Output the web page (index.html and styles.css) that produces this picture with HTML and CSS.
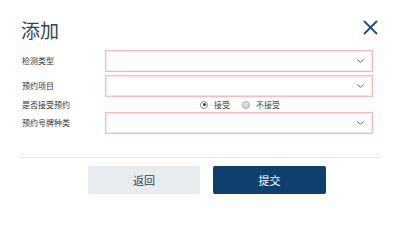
FILE: index.html
```html
<!DOCTYPE html>
<html lang="zh-CN">
<head>
<meta charset="utf-8">
<title>添加</title>
<link rel="stylesheet" href="styles.css">
</head>
<body>
<div class="dialog">
  <div class="header">
    <h1 class="title">添加</h1>
    <button class="close" type="button" aria-label="关闭">
      <svg width="15" height="15" viewBox="0 0 15 15"><path d="M1 1 L14 14 M14 1 L1 14" stroke="#1d4f7c" stroke-width="1.8" fill="none"/></svg>
    </button>
  </div>
  <form class="form">
    <div class="row">
      <label class="label">检测类型</label>
      <div class="select"><svg class="chev" width="7" height="4" viewBox="0 0 7 4"><path d="M0.5 0.5 L3.5 3.3 L6.5 0.5" stroke="#666" stroke-width="1" fill="none"/></svg></div>
    </div>
    <div class="row">
      <label class="label">预约项目</label>
      <div class="select"><svg class="chev" width="7" height="4" viewBox="0 0 7 4"><path d="M0.5 0.5 L3.5 3.3 L6.5 0.5" stroke="#666" stroke-width="1" fill="none"/></svg></div>
    </div>
    <div class="row row-radio">
      <label class="label">是否接受预约</label>
      <div class="radios">
        <span class="radio checked"></span><span class="radio-text">接受</span>
        <span class="radio"></span><span class="radio-text">不接受</span>
      </div>
    </div>
    <div class="row">
      <label class="label">预约号牌种类</label>
      <div class="select"><svg class="chev" width="7" height="4" viewBox="0 0 7 4"><path d="M0.5 0.5 L3.5 3.3 L6.5 0.5" stroke="#666" stroke-width="1" fill="none"/></svg></div>
    </div>
  </form>
  <div class="divider"></div>
  <div class="actions">
    <button class="btn btn-back" type="button">返回</button>
    <button class="btn btn-submit" type="button">提交</button>
  </div>
</div>
</body>
</html>
```
FILE: styles.css
```css
html, body {
  margin: 0;
  padding: 0;
  background: #ffffff;
}
body {
  font-family: "Noto Sans CJK SC", "Noto Sans", sans-serif;
  width: 400px;
  height: 217px;
  overflow: hidden;
}
.dialog {
  padding: 18px 20px 0 20px;
}
.header {
  display: flex;
  justify-content: space-between;
  align-items: flex-start;
  height: 24px;
  padding: 0 2px 0 1px;
}
.title {
  margin: 0;
  font-size: 19px;
  line-height: 24px;
  font-weight: normal;
  color: #2f4556;
}
.close {
  margin-top: 2px;
  padding: 0;
  border: 0;
  background: none;
  width: 15px;
  height: 15px;
  display: block;
}
.close svg { display: block; }
.form {
  margin-top: 8px;
  display: flex;
  flex-direction: column;
  gap: 3px;
  padding: 0 7px 0 2px;
}
.row {
  display: flex;
  align-items: center;
  height: 22px;
}
.row-radio {
  height: 9px;
}
.label {
  width: 83px;
  flex: none;
  font-size: 8px;
  line-height: 10px;
  color: #333;
}
.select {
  flex: 1;
  height: 22px;
  box-sizing: border-box;
  border: 1px solid #f6bcbc;
  box-shadow: 0 0 0 1px #fde3e3 inset;
  display: flex;
  align-items: center;
  justify-content: flex-end;
  padding-right: 8px;
}
.chev { display: block; }
.radios {
  flex: 1;
  display: flex;
  align-items: center;
  justify-content: center;
  padding-left: 2px;
}
.radio {
  width: 8px;
  height: 8px;
  box-sizing: border-box;
  border-radius: 50%;
  border: 1px solid #a9a9a9;
  background: linear-gradient(#e6e6e6, #cfcfcf);
  position: relative;
  flex: none;
}
.radio.checked {
  background: #fff;
  border-color: #8c8c8c;
}
.radio.checked::after {
  content: "";
  position: absolute;
  left: 1.5px;
  top: 1.5px;
  width: 3px;
  height: 3px;
  border-radius: 50%;
  background: #333;
}
.radio-text {
  font-size: 8px;
  line-height: 10px;
  color: #444;
  margin-left: 6px;
  margin-right: 12px;
}
.radio-text:last-child { margin-right: 0; }
.divider {
  margin-top: 23px;
  height: 1px;
  background: #e6e6e6;
}
.actions {
  margin-top: 8px;
  display: flex;
  gap: 13px;
  padding-left: 68px;
}
.btn {
  height: 28px;
  border: 0;
  border-radius: 2px;
  font-family: "Noto Sans CJK SC", "Noto Sans", sans-serif;
  font-size: 11px;
  padding: 0;
}
.btn-back {
  width: 112px;
  background: #e8ebef;
  color: #2f4556;
}
.btn-submit {
  width: 113px;
  background: #0e3f6d;
  color: #ffffff;
}
```
